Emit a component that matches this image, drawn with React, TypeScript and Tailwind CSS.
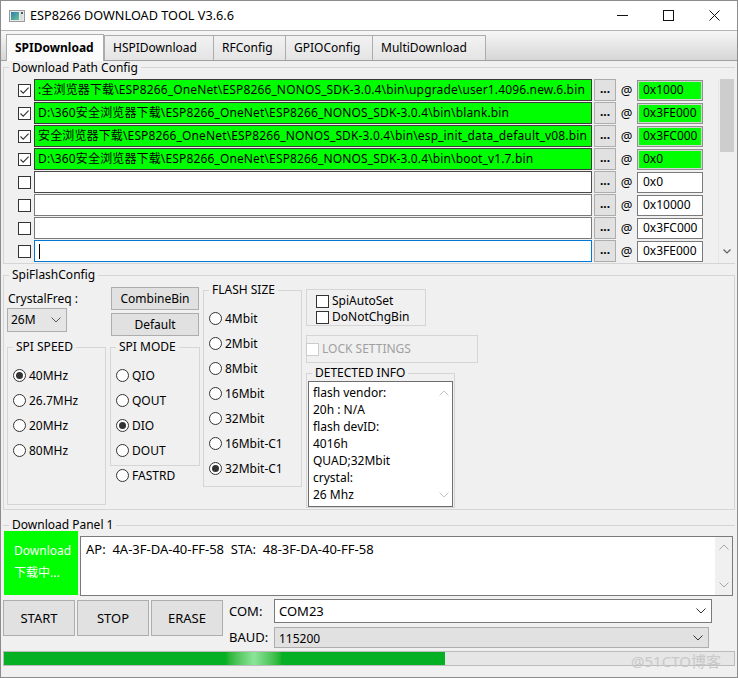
import React from "react";

type PathRow = {
  checked: boolean;
  path: string;
  addr: string;
  green?: boolean;
  focused?: boolean;
  dark?: boolean;
  hidden?: boolean;
};

const ROWS: PathRow[] = [
  {
    checked: true,
    green: true,
    path: ":全浏览器下载\\ESP8266_OneNet\\ESP8266_NONOS_SDK-3.0.4\\bin\\upgrade\\user1.4096.new.6.bin",
    addr: "0x1000",
  },
  {
    checked: true,
    green: true,
    path: "D:\\360安全浏览器下载\\ESP8266_OneNet\\ESP8266_NONOS_SDK-3.0.4\\bin\\blank.bin",
    addr: "0x3FE000",
  },
  {
    checked: true,
    green: true,
    path: "安全浏览器下载\\ESP8266_OneNet\\ESP8266_NONOS_SDK-3.0.4\\bin\\esp_init_data_default_v08.bin",
    addr: "0x3FC000",
  },
  {
    checked: true,
    green: true,
    path: "D:\\360安全浏览器下载\\ESP8266_OneNet\\ESP8266_NONOS_SDK-3.0.4\\bin\\boot_v1.7.bin",
    addr: "0x0",
  },
  { checked: false, path: "", addr: "0x0", dark: true },
  { checked: false, path: "", addr: "0x10000" },
  { checked: false, path: "", addr: "0x3FC000" },
  { checked: false, path: "", addr: "0x3FE000", focused: true },
  // next row, scrolled out of view: only its top edge shows
  { checked: false, path: "", addr: "", hidden: true },
];

const DETECTED = ["flash vendor:", "20h : N/A", "flash devID:", "4016h", "QUAD;32Mbit", "crystal:", "26 Mhz"];

function Check({ checked, disabled }: { checked?: boolean; disabled?: boolean }) {
  return (
    <span
      className={`flex h-[13px] w-[13px] shrink-0 items-center justify-center border bg-white ${
        disabled ? "border-[#cccccc]" : "border-[#333333]"
      }`}
    >
      {checked && (
        <svg width="11" height="11" viewBox="0 0 11 11">
          <path d="M1.5 5.5 L4.2 8.2 L9.6 2.6" fill="none" stroke="#333333" strokeWidth="1.1" />
        </svg>
      )}
    </span>
  );
}

function Radio({ label, checked }: { label: string; checked?: boolean }) {
  return (
    <div className="flex h-[25px] shrink-0 items-center gap-[3px]">
      <span className="flex h-[13px] w-[13px] items-center justify-center rounded-full border border-[#333333] bg-white">
        {checked && <span className="h-[7px] w-[7px] rounded-full bg-[#333333]" />}
      </span>
      <span>{label}</span>
    </div>
  );
}

function Chevron({ up, color = "#333333" }: { up?: boolean; color?: string }) {
  return (
    <svg width="10" height="6" viewBox="0 0 10 6">
      <path d={up ? "M0.5 5.5 L5 1 L9.5 5.5" : "M0.5 0.5 L5 5 L9.5 0.5"} fill="none" stroke={color} strokeWidth="1" />
    </svg>
  );
}

function TitleBar() {
  return (
    <div className="flex h-[29px] items-center bg-white">
      <svg className="ml-[8px]" width="16" height="12" viewBox="0 0 16 12">
        <defs>
          <linearGradient id="ico" x1="0" y1="0" x2="1" y2="1">
            <stop offset="0" stopColor="#2b7fb0" />
            <stop offset="1" stopColor="#6cc38f" />
          </linearGradient>
        </defs>
        <rect x="0.5" y="0.5" width="15" height="11" fill="#e9e9e9" stroke="#9a9a9a" />
        <rect x="2" y="2" width="8" height="8" fill="url(#ico)" />
        <rect x="11" y="2" width="3" height="8" fill="#d6dde0" />
        <rect x="12" y="2" width="2" height="2" fill="#555555" />
      </svg>
      <span className="ml-[5px] text-[12.7px]">ESP8266 DOWNLOAD TOOL V3.6.6</span>
      <div className="ml-auto flex h-full">
        <div className="flex w-[46px] items-center justify-center">
          <svg width="11" height="1" viewBox="0 0 11 1">
            <rect width="11" height="1" fill="#111111" />
          </svg>
        </div>
        <div className="flex w-[46px] items-center justify-center">
          <svg width="11" height="11" viewBox="0 0 11 11">
            <rect x="0.5" y="0.5" width="10" height="10" fill="none" stroke="#111111" />
          </svg>
        </div>
        <div className="flex w-[46px] items-center justify-center">
          <svg width="11" height="11" viewBox="0 0 11 11">
            <path d="M0.5 0.5 L10.5 10.5 M10.5 0.5 L0.5 10.5" stroke="#111111" strokeWidth="1" />
          </svg>
        </div>
      </div>
    </div>
  );
}

function TabStrip() {
  return (
    <div className="flex h-[31px] items-end border-y border-t-[#b4b4b4] border-b-[#a0a0a0] bg-linear-to-b from-[#f7f7f7] to-[#d6d6d6] pl-[5px]">
      <div className="relative z-10 -mb-px flex h-[27px] w-[98px] items-center border border-b-0 border-[#acacac] bg-[#fbfbfb] pb-px pl-[8px] font-bold">
        SPIDownload
      </div>
      <div className="flex h-[25px] w-[110px] items-center border border-b-0 border-[#acacac] bg-linear-to-b from-[#f2f2f2] to-[#e4e4e4] pl-[8px]">
        HSPIDownload
      </div>
      <div className="-ml-px flex h-[25px] w-[73px] items-center border border-b-0 border-[#acacac] bg-linear-to-b from-[#f2f2f2] to-[#e4e4e4] pl-[8px]">
        RFConfig
      </div>
      <div className="-ml-px flex h-[25px] w-[88px] items-center border border-b-0 border-[#acacac] bg-linear-to-b from-[#f2f2f2] to-[#e4e4e4] pl-[8px]">
        GPIOConfig
      </div>
      <div className="-ml-px flex h-[25px] w-[114px] items-center border border-b-0 border-[#acacac] bg-linear-to-b from-[#f2f2f2] to-[#e4e4e4] pl-[8px]">
        MultiDownload
      </div>
    </div>
  );
}

function PathRowView({ row }: { row: PathRow }) {
  const pathStyle = row.green
    ? "border-[#3a3a3a] bg-[#00ff00]"
    : row.focused
    ? "border-[#0078d7] bg-white"
    : row.dark
    ? "border-[#4a4a4a] bg-white"
    : "border-[#7a7a7a] bg-white";
  const addrStyle = row.green
    ? "border-[#8f8f8f] bg-[#00ff00] shadow-[inset_0_0_0_1px_#d4d4d4]"
    : "border-[#7a7a7a] bg-white";
  return (
    <div className="flex h-[22px] shrink-0 items-center">
      <Check checked={row.checked} />
      <div
        className={`ml-[3px] flex h-[22px] w-[558px] items-center overflow-hidden whitespace-nowrap border px-[3px] tracking-[0.14px] ${pathStyle}`}
      >
        {row.path}
        {row.focused && <span className="ml-px h-[15px] w-px bg-black" />}
      </div>
      <div className="ml-[2px] flex h-[22px] w-[22px] items-end justify-center border border-[#adadad] bg-[#e1e1e1] pb-[5px] font-bold leading-none">
        {row.hidden ? "" : "..."}
      </div>
      <div className="w-[21px] text-center text-[13px]">{row.hidden ? "" : "@"}</div>
      <div className={`flex h-[21px] w-[66px] items-center border px-[5px] ${addrStyle}`}>{row.addr}</div>
    </div>
  );
}

function PathConfig() {
  return (
    <fieldset className="-mt-px min-w-0 border border-r-0 border-[#d5d5d5]">
      <legend className="ml-[5px] px-[3px] leading-[15px]">Download Path Config</legend>
      <div className="mt-[4px] flex h-[184px] overflow-hidden">
        <div className="flex w-[714px] flex-col gap-px pl-[14px]">
          {ROWS.map((r, i) => (
            <PathRowView key={i} row={r} />
          ))}
        </div>
        <div className="flex w-[17px] flex-col border-l border-[#e6e6e6] bg-[#f0f0f0]">
          <div className="mx-px h-[73px] bg-[#cdcdcd]" />
          <div className="flex-1" />
          <div className="flex h-[14px] items-start justify-center">
            <svg width="8" height="5" viewBox="0 0 8 5">
              <path d="M0.5 0.5 L4 4 L7.5 0.5" fill="none" stroke="#606060" strokeWidth="1.2" />
            </svg>
          </div>
        </div>
      </div>
    </fieldset>
  );
}

function WinButton({ children, className }: { children: React.ReactNode; className: string }) {
  return (
    <div className={`flex items-center justify-center border border-[#adadad] bg-[#e1e1e1] ${className}`}>{children}</div>
  );
}

function SpiFlashConfig() {
  return (
    <fieldset className="mt-[3px] h-[243px] min-w-0 border border-[#d5d5d5]">
      <legend className="ml-[5px] px-[3px] leading-[16px]">SpiFlashConfig</legend>
      <div className="flex items-start pl-[3px]">
        {/* crystal + spi speed */}
        <div className="flex w-[99px] flex-col">
          <div className="mt-[8px] pl-px leading-[16px]">CrystalFreq :</div>
          <div className="mt-px flex h-[24px] w-[60px] items-center justify-between border border-[#adadad] bg-[#e5e5e5] pl-[3px] pr-[5px]">
            <span>26M</span>
            <Chevron color="#555555" />
          </div>
          <fieldset className="mt-[7px] h-[166px] min-w-0 border border-[#d5d5d5]">
            <legend className="ml-[5px] px-[3px] leading-[16px]">SPI SPEED</legend>
            <div className="flex flex-col pl-[5px] pt-[8px]">
              <Radio label="40MHz" checked />
              <Radio label="26.7MHz" />
              <Radio label="20MHz" />
              <Radio label="80MHz" />
            </div>
          </fieldset>
        </div>

        {/* buttons + spi mode */}
        <div className="ml-[4px] flex w-[90px] flex-col">
          <WinButton className="ml-px mt-[4px] h-[23px] w-[88px]">CombineBin</WinButton>
          <WinButton className="ml-px mt-[3px] h-[23px] w-[88px]">Default</WinButton>
          <fieldset className="mt-[3px] h-[127px] min-w-0 border border-[#d5d5d5]">
            <legend className="ml-[5px] px-[3px] leading-[16px]">SPI MODE</legend>
            <div className="flex flex-col pl-[5px] pt-[8px]">
              <Radio label="QIO" />
              <Radio label="QOUT" />
              <Radio label="DIO" checked />
              <Radio label="DOUT" />
            </div>
          </fieldset>
          <div className="-mt-[3px] pl-[6px]">
            <Radio label="FASTRD" />
          </div>
        </div>

        {/* flash size */}
        <div className="ml-[3px] flex w-[99px] flex-col">
          <fieldset className="-mt-px h-[205px] min-w-0 border border-[#d5d5d5]">
            <legend className="ml-[5px] px-[3px] leading-[16px]">FLASH SIZE</legend>
            <div className="flex flex-col pl-[5px] pt-[8px]">
              <Radio label="4Mbit" />
              <Radio label="2Mbit" />
              <Radio label="8Mbit" />
              <Radio label="16Mbit" />
              <Radio label="32Mbit" />
              <Radio label="16Mbit-C1" />
              <Radio label="32Mbit-C1" checked />
            </div>
          </fieldset>
        </div>

        {/* options + detected info */}
        <div className="ml-[4px] flex w-[172px] flex-col">
          <div className="mt-[6px] flex h-[37px] w-[120px] flex-col border border-[#d5d5d5] pl-[9px] pt-[3px]">
            <div className="flex h-[16px] items-center gap-[3px]">
              <Check />
              <span>SpiAutoSet</span>
            </div>
            <div className="flex h-[16px] items-center gap-[3px]">
              <Check />
              <span>DoNotChgBin</span>
            </div>
          </div>
          <div className="mt-[9px] flex h-[28px] w-[172px] items-center border border-[#d5d5d5]">
            <span className="-ml-px">
              <Check disabled />
            </span>
            <span className="ml-[3px] text-[#a0a0a0]">LOCK SETTINGS</span>
          </div>
          <fieldset className="mt-[2px] w-[149px] min-w-0 border border-[#d5d5d5]">
            <legend className="ml-[5px] px-[3px] leading-[16px]">DETECTED INFO</legend>
            <div className="ml-px flex h-[126px] w-[145px] border border-[#6e6e6e] bg-white">
              <div className="flex flex-1 flex-col pl-[4px] pt-[2px]">
                {DETECTED.map((t) => (
                  <div key={t} className="leading-[17px]">
                    {t}
                  </div>
                ))}
              </div>
              <div className="flex w-[17px] flex-col items-center justify-between py-[8px]">
                <Chevron up color="#c4c4c4" />
                <Chevron color="#c4c4c4" />
              </div>
            </div>
          </fieldset>
        </div>
      </div>
    </fieldset>
  );
}

function DownloadPanel() {
  return (
    <fieldset className="mt-[7px] min-w-0 border-t border-[#d5d5d5]">
      <legend className="ml-[6px] px-[3px] leading-[16px]">Download Panel 1</legend>
      <div className="-mt-[2px] flex items-start">
        <div className="ml-px flex h-[64px] w-[74px] flex-col bg-[#00ff00] pl-[10px] pt-[12px] leading-[16px] text-white">
          <span>Download</span>
          <span className="mt-[6px]">下载中...</span>
        </div>
        <div className="ml-[2px] mr-[2px] mt-[5px] flex h-[60px] flex-1 border border-[#7a7a7a] bg-white">
          <div className="flex-1 whitespace-pre pl-[5px] pt-[4px] text-[13px] leading-[16px]">
            {"AP:  4A-3F-DA-40-FF-58  STA:  48-3F-DA-40-FF-58"}
          </div>
          <div className="flex w-[17px] flex-col items-center justify-between bg-[#f0f0f0] py-[7px]">
            <Chevron up color="#a8a8a8" />
            <Chevron color="#a8a8a8" />
          </div>
        </div>
      </div>

      <div className="mt-[4px] flex items-start">
        <WinButton className="h-[36px] w-[72px] text-[13px]">START</WinButton>
        <WinButton className="ml-[2px] h-[36px] w-[72px] text-[13px]">STOP</WinButton>
        <WinButton className="ml-[2px] h-[36px] w-[72px] text-[13px]">ERASE</WinButton>
        <div className="-mt-px ml-[6px] flex flex-col">
          <div className="flex h-[24px] items-center">
            <span className="w-[45px] text-[13px]">COM:</span>
            <div className="flex h-[24px] w-[438px] items-center justify-between border border-[#7a7a7a] bg-white pl-[4px] pr-[5px] text-[13px]">
              <span>COM23</span>
              <Chevron />
            </div>
          </div>
          <div className="mt-[4px] flex h-[21px] items-center">
            <span className="w-[45px] text-[13px]">BAUD:</span>
            <div className="flex h-[21px] w-[435px] items-center justify-between border border-[#adadad] bg-[#e1e1e1] pl-[4px] pr-[5px]">
              <span className="pt-[3px]">115200</span>
              <Chevron />
            </div>
          </div>
        </div>
      </div>

      <div className="mt-[3px] flex h-[15px] w-[732px] border border-[#bcbcbc] bg-[#e6e6e6]">
        <div className="flex h-full w-[441px] bg-[#06b025]">
          <div className="ml-[222px] h-full w-[56px] bg-linear-to-r from-[#06b025] via-[#8be59a] to-[#06b025]" />
        </div>
      </div>
    </fieldset>
  );
}

export default function App() {
  return (
    <div className="relative h-[678px] w-[738px] overflow-hidden border border-[#8c8c8c] bg-[#f0f0f0] font-['Noto_Sans','Noto_Sans_CJK_SC',sans-serif] text-[12px] leading-none text-black">
      <TitleBar />
      <TabStrip />
      <div className="flex flex-col px-[2px]">
        <PathConfig />
        <SpiFlashConfig />
        <DownloadPanel />
      </div>
      <div className="pointer-events-none absolute left-[630px] top-[650px] text-[15px] leading-[20px] text-[#c9c9c9]">
        @51CTO博客
      </div>
    </div>
  );
}
